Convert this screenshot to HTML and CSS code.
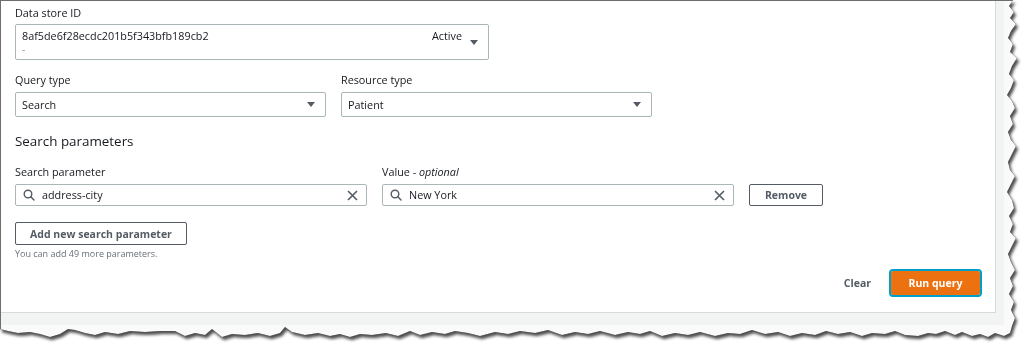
FILE: index.html
```html
<!DOCTYPE html>
<html lang="en">
<head>
<meta charset="utf-8">
<title>Run query</title>
<link rel="stylesheet" href="styles.css">
</head>
<body>
<div class="frame">
  <div class="sheet">
    <div class="strip">
      <div class="panel">
        <div class="field">
          <div class="label">Data store ID</div>
          <div class="ds-box">
            <div class="ds-text">
              <div class="ds-id">8af5de6f28ecdc201b5f343bfb189cb2</div>
              <div class="ds-sub">-</div>
            </div>
            <div class="ds-status">Active</div>
            <span class="caret ds-caret"></span>
          </div>
        </div>

        <div class="row-selects">
          <div class="field col-select">
            <div class="label">Query type</div>
            <div class="select"><span class="select-value">Search</span><span class="caret"></span></div>
          </div>
          <div class="field col-select">
            <div class="label">Resource type</div>
            <div class="select"><span class="select-value">Patient</span><span class="caret"></span></div>
          </div>
        </div>

        <h2 class="section-title">Search parameters</h2>

        <div class="param-row">
          <div class="field col-input">
            <div class="label">Search parameter</div>
            <div class="search-input">
              <svg class="icon-search" width="12" height="12" viewBox="0 0 12 12"><circle cx="5" cy="5" r="3.8" fill="none" stroke="#545b64" stroke-width="1.4"/><line x1="7.8" y1="7.8" x2="11" y2="11" stroke="#545b64" stroke-width="1.5" stroke-linecap="round"/></svg>
              <span class="input-value">address-city</span>
              <svg class="icon-clear" width="11" height="11" viewBox="0 0 11 11"><path d="M1 1 L10 10 M10 1 L1 10" stroke="#545b64" stroke-width="1.6" fill="none"/></svg>
            </div>
          </div>
          <div class="field col-input">
            <div class="label">Value - <em>optional</em></div>
            <div class="search-input">
              <svg class="icon-search" width="12" height="12" viewBox="0 0 12 12"><circle cx="5" cy="5" r="3.8" fill="none" stroke="#545b64" stroke-width="1.4"/><line x1="7.8" y1="7.8" x2="11" y2="11" stroke="#545b64" stroke-width="1.5" stroke-linecap="round"/></svg>
              <span class="input-value">New York</span>
              <svg class="icon-clear" width="11" height="11" viewBox="0 0 11 11"><path d="M1 1 L10 10 M10 1 L1 10" stroke="#545b64" stroke-width="1.6" fill="none"/></svg>
            </div>
          </div>
          <button class="btn btn-remove">Remove</button>
        </div>

        <button class="btn btn-add">Add new search parameter</button>
        <div class="hint">You can add 49 more parameters.</div>

        <div class="actions">
          <button class="btn-link">Clear</button>
          <button class="btn-primary">Run query</button>
        </div>
      </div>
    </div>
  </div>
</div>
</body>
</html>
```

FILE: styles.css
```css
* { box-sizing: border-box; }

html, body {
  margin: 0;
  padding: 0;
  background: #ffffff;
}

body {
  font-family: "Open Sans", "Noto Sans", Arial, sans-serif;
  font-size: 10.8px;
  line-height: 14px;
  color: #16191f;
  width: 1024px;
  height: 348px;
  overflow: hidden;
}

.frame {
  width: 1024px;
  height: 348px;
  filter: drop-shadow(0 0 0.7px rgba(0, 0, 0, 0.9)) drop-shadow(2px 3px 1.8px rgba(0, 0, 0, 0.7));
}

.sheet {
  width: 1020px;
  height: 342px;
  background: #fafafa;
  border-left: 1px solid #6e6e6e;
  border-top: 1px solid #6e6e6e;
  clip-path: polygon(
    0 0, 1013px 0, 1009px 6px, 1014px 12px, 1010px 18px, 1016px 24px, 1011px 31px, 1008px 38px,
    1013px 44px, 1010px 52px, 1017px 58px, 1012px 66px, 1009px 74px, 1014px 80px, 1011px 88px,
    1007px 95px, 1012px 101px, 1015px 108px, 1010px 116px, 1013px 124px, 1008px 132px, 1011px 140px,
    1016px 146px, 1012px 154px, 1008px 162px, 1010px 170px, 1015px 176px, 1011px 184px, 1007px 192px,
    1012px 200px, 1014px 208px, 1009px 216px, 1013px 224px, 1010px 232px, 1016px 238px, 1012px 246px,
    1008px 254px, 1011px 262px, 1015px 270px, 1010px 278px, 1013px 286px, 1009px 294px, 1014px 302px,
    1011px 310px, 1015px 318px, 1012px 326px, 1010px 333px,
    1004px 336px, 995px 333px, 988px 337px, 980px 334px, 972px 336px, 962px 332px, 955px 335px,
    945px 331px, 936px 334px, 928px 333px, 918px 336px, 905px 335px, 895px 331px, 885px 334px,
    872px 333px, 862px 336px, 850px 332px, 838px 334px, 826px 331px, 815px 335px, 802px 333px,
    790px 336px, 778px 332px, 765px 334px, 752px 330px, 740px 334px, 728px 333px, 715px 336px,
    700px 332px, 688px 335px, 675px 333px, 662px 336px, 650px 331px, 640px 334px, 628px 332px,
    615px 335px, 600px 331px, 588px 334px, 575px 332px, 562px 335px, 548px 330px, 535px 333px,
    520px 331px, 508px 334px, 495px 332px, 480px 336px, 468px 333px, 455px 331px, 445px 334px,
    432px 332px, 420px 335px, 410px 331px, 398px 336px, 386px 333px, 372px 335px, 360px 334px,
    350px 337px, 340px 334px, 330px 336px, 318px 333px, 305px 335px, 292px 332px, 285px 327px,
    280px 333px, 270px 336px, 258px 333px, 245px 335px, 232px 334px, 222px 337px, 212px 329px,
    205px 335px, 195px 333px, 185px 336px, 175px 331px, 160px 331px, 145px 332px, 130px 331px,
    118px 334px, 105px 332px, 95px 335px, 85px 333px, 75px 330px, 68px 329px, 60px 334px,
    50px 337px, 40px 334px, 30px 332px, 18px 333px, 8px 331px, 0 329px
  );
}

.strip {
  width: 1003px;
  height: 324px;
  background: #f2f3f3;
}

.panel {
  width: 995px;
  height: 312px;
  background: #ffffff;
  border-right: 1px solid #d5dbdb;
  border-bottom: 1px solid #d5dbdb;
  padding: 5px 0 0 14px;
}

.field {
  display: flex;
  flex-direction: column;
}

.label {
  line-height: 14px;
  color: #16191f;
}

.label em {
  font-style: italic;
}

.ds-box {
  margin-top: 4px;
  width: 474px;
  height: 36px;
  border: 1px solid #aab7b8;
  border-radius: 2px;
  padding: 4px 10px 2px 6px;
  display: flex;
  align-items: flex-start;
}

.ds-text {
  flex: 1;
}

.ds-id {
  line-height: 14px;
}

.ds-sub {
  line-height: 13px;
  color: #879196;
  font-size: 10px;
}

.ds-status {
  line-height: 14px;
  margin-right: 8px;
}

.caret {
  width: 0;
  height: 0;
  border-left: 4px solid transparent;
  border-right: 4px solid transparent;
  border-top: 5px solid #545b64;
}

.ds-caret {
  margin-top: 11px;
}

.row-selects {
  display: flex;
  gap: 15px;
  margin-top: 13px;
}

.col-select {
  width: 311px;
}

.select {
  margin-top: 5px;
  height: 25px;
  border: 1px solid #aab7b8;
  border-radius: 2px;
  padding: 0 10px 0 6px;
  display: flex;
  align-items: center;
  justify-content: space-between;
}

.section-title {
  margin: 15px 0 0 0;
  font-size: 13.4px;
  line-height: 18px;
  font-weight: 400;
  color: #16191f;
}

.param-row {
  display: flex;
  align-items: flex-end;
  gap: 15px;
  margin-top: 15px;
}

.col-input {
  width: 352px;
}

.search-input {
  margin-top: 5px;
  height: 22px;
  border: 1px solid #aab7b8;
  border-radius: 2px;
  padding: 0 8px 0 7px;
  display: flex;
  align-items: center;
}

.icon-search {
  flex: none;
}

.input-value {
  flex: 1;
  margin-left: 7px;
}

.icon-clear {
  flex: none;
}

.btn {
  font-family: inherit;
  font-size: 10.5px;
  font-weight: 700;
  color: #545b64;
  background: #ffffff;
  border: 1px solid #545b64;
  border-radius: 2px;
  padding: 0;
  line-height: 14px;
  cursor: pointer;
}

.btn-remove {
  width: 74px;
  height: 22px;
}

.btn-add {
  display: block;
  margin-top: 16px;
  width: 172px;
  height: 23px;
}

.hint {
  margin-top: 3px;
  font-size: 9px;
  line-height: 12px;
  color: #687078;
}

.actions {
  display: flex;
  justify-content: flex-end;
  align-items: center;
  gap: 20px;
  margin-top: 11px;
  padding-right: 15px;
}

.btn-link {
  font-family: inherit;
  font-size: 10.5px;
  font-weight: 700;
  color: #545b64;
  background: transparent;
  border: 0;
  padding: 0;
  line-height: 14px;
}

.btn-primary {
  font-family: inherit;
  font-size: 10.5px;
  font-weight: 700;
  color: #ffffff;
  background: #ec7211;
  border: 1px solid #ec7211;
  border-radius: 2px;
  width: 89px;
  height: 24px;
  padding: 0;
  line-height: 14px;
  outline: 2px solid #00a1c9;
  outline-offset: 0;
}
```
